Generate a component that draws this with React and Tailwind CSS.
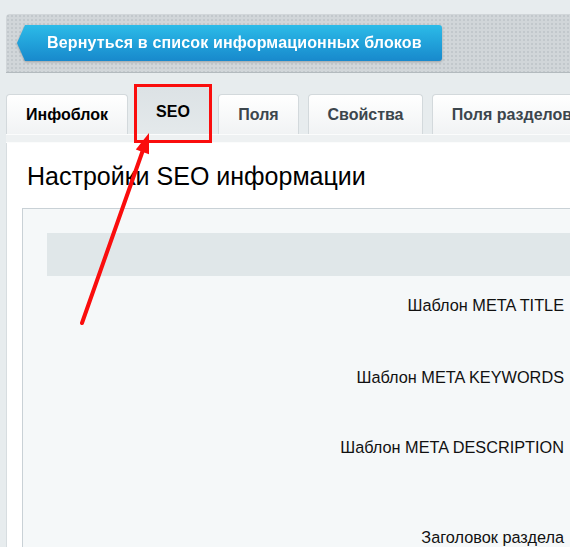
import React from "react";

const tabs = [
  { label: "Инфоблок", w: "w-[122px]", color: "text-black" },
  { label: "SEO", w: "w-[72px]", active: true },
  { label: "Поля", w: "w-[81px]" },
  { label: "Свойства", w: "w-[115px]" },
  { label: "Поля разделов", w: "w-[160px]" },
];

const fields = [
  { label: "Шаблон META TITLE", mt: "mt-[20px]" },
  { label: "Шаблон META KEYWORDS", mt: "mt-[54px]" },
  { label: "Шаблон META DESCRIPTION", mt: "mt-[52px]" },
  { label: "Заголовок раздела", mt: "mt-[72px]" },
];

const BackButton = () => (
  <div className="flex items-stretch h-[36px] drop-shadow-[0_1px_1px_rgba(0,0,0,0.25)]">
    <svg width="8" height="36" viewBox="0 0 8 36" className="block">
      <defs>
        <linearGradient id="bb" x1="0" y1="0" x2="0" y2="1">
          <stop offset="0" stopColor="#2cbbe8" />
          <stop offset="1" stopColor="#1889cc" />
        </linearGradient>
      </defs>
      <polygon points="8,0 8,36 0,18" fill="url(#bb)" />
    </svg>
    <div className="w-[417px] rounded-r-[3px] bg-gradient-to-b from-[#2cbbe8] to-[#1889cc] flex items-center pl-[22px] text-white font-bold text-[16px] tracking-[0.15px]">
      Вернуться в список информационных блоков
    </div>
  </div>
);

export default function App() {
  return (
    <div
      className="relative w-full h-[547px] overflow-hidden bg-[#e7ecee] pl-[6px] pt-[14px]"
      style={{ fontFamily: '"Liberation Sans", Arial, sans-serif' }}
    >
      {/* Toolbar */}
      <div className="h-[59px] rounded-tl-[4px] border-b border-[#b3babe] bg-[#d1d6d9] bg-[radial-gradient(#c2c8cc_1px,transparent_1.2px)] bg-[size:4px_4px] flex items-center pl-[11px]">
        <BackButton />
      </div>

      {/* Tabs */}
      <div className="mt-[14px] h-[47px] flex items-end gap-[9px]">
        {tabs.map((t) =>
          t.active ? (
            <div
              key={t.label}
              className={`${t.w} shrink-0 h-[47px] rounded-t-[4px] bg-gradient-to-b from-[#dce2e5] to-[#e4e9eb] flex items-center justify-center pt-[2px] font-bold text-[16px] text-black`}
            >
              {t.label}
            </div>
          ) : (
            <div
              key={t.label}
              className={`${t.w} shrink-0 h-[40px] rounded-t-[4px] border border-b-0 border-[#d3d9dc] bg-gradient-to-b from-white to-[#f1f3f4] flex items-center justify-center font-bold text-[16px] whitespace-nowrap ${t.color || "text-[#3c464d]"}`}
            >
              {t.label}
            </div>
          )
        )}
      </div>
      <div className="h-[9px] bg-[#eef1f2] border-t border-[#fbfcfc] border-b border-[#c9d0d4]" />

      {/* Content */}
      <div className="bg-white border-l border-[#d7dde0] h-[420px]">
        <h1 className="pt-[19px] pl-[20px] text-[25px] leading-[28px] text-black font-normal">
          Настройки SEO информации
        </h1>
        <div className="mt-[18px] ml-[15px] border-t border-l border-[#c9d1d6] bg-[#f5f8f9] h-[400px] pt-[24px] pl-[24px]">
          <div className="h-[43px] bg-[#e0e7e9]" />
          {fields.map((f) => (
            <div
              key={f.label}
              className={`${f.mt} pr-[6px] text-right text-[16.3px] leading-[18px] text-[#111]`}
            >
              {f.label}
            </div>
          ))}
        </div>
      </div>

      {/* Annotation: red box and arrow */}
      <div className="absolute left-[134px] top-[84px] w-[78px] h-[59px] border-[3px] border-[#fa0d0d]" />
      <svg
        className="absolute left-0 top-0 pointer-events-none"
        width="570"
        height="547"
        viewBox="0 0 570 547"
      >
        <line x1="82" y1="323" x2="143" y2="150" stroke="#fa0d0d" strokeWidth="4" strokeLinecap="round" />
        <polygon points="149,133 135.8,149.6 149,154.2" fill="#fa0d0d" />
      </svg>
    </div>
  );
}
